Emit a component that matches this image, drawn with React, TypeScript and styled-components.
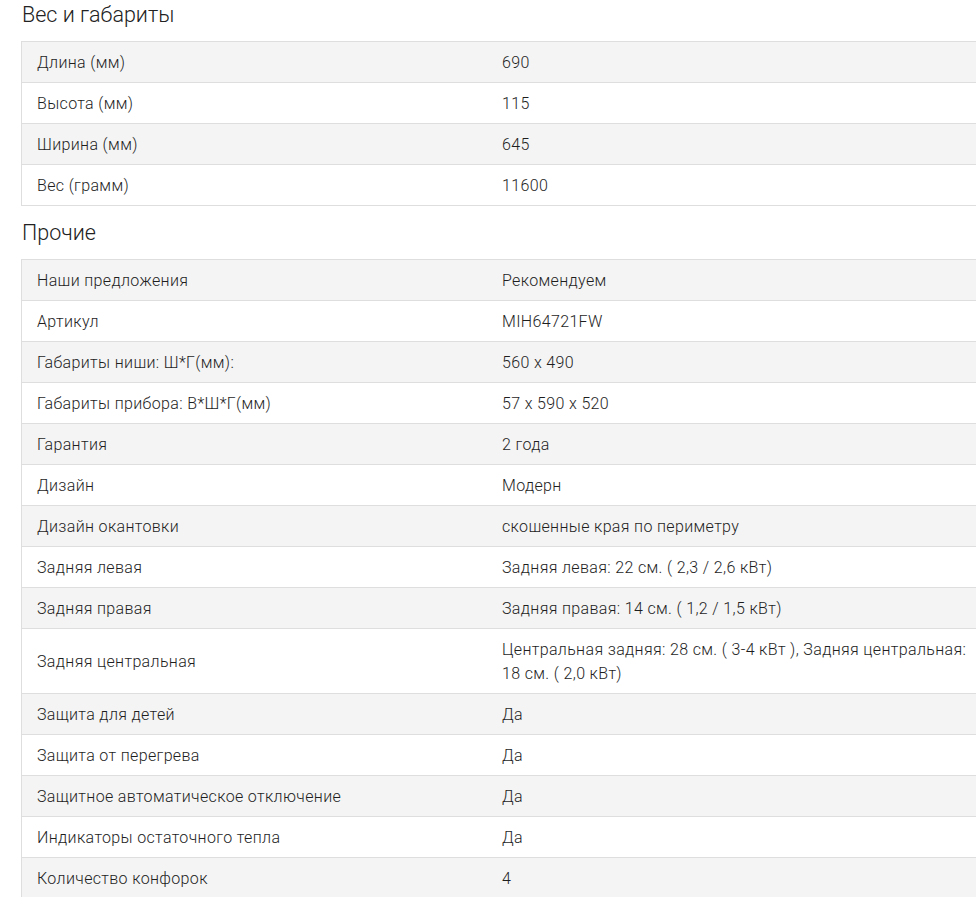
import styled, { createGlobalStyle } from "styled-components";

const GlobalStyle = createGlobalStyle`
  body {
    margin: 0;
    background: #fff;
    font-family: Roboto, "Liberation Sans", Arial, sans-serif;
    color: #333;
    overflow: hidden;
  }
`;

type Row = [string, string];

const sizes: Row[] = [
  ["Длина (мм)", "690"],
  ["Высота (мм)", "115"],
  ["Ширина (мм)", "645"],
  ["Вес (грамм)", "11600"],
];

const other: Row[] = [
  ["Наши предложения", "Рекомендуем"],
  ["Артикул", "MIH64721FW"],
  ["Габариты ниши: Ш*Г(мм):", "560 x 490"],
  ["Габариты прибора: В*Ш*Г(мм)", "57 x 590 x 520"],
  ["Гарантия", "2 года"],
  ["Дизайн", "Модерн"],
  ["Дизайн окантовки", "скошенные края по периметру"],
  ["Задняя левая", "Задняя левая: 22 см. ( 2,3 / 2,6 кВт)"],
  ["Задняя правая", "Задняя правая: 14 см. ( 1,2 / 1,5 кВт)"],
  [
    "Задняя центральная",
    "Центральная задняя: 28 см. ( 3-4 кВт ), Задняя центральная: 18 см. ( 2,0 кВт)",
  ],
  ["Защита для детей", "Да"],
  ["Защита от перегрева", "Да"],
  ["Защитное автоматическое отключение", "Да"],
  ["Индикаторы остаточного тепла", "Да"],
  ["Количество конфорок", "4"],
];

const Page = styled.div`
  padding: 0 0 0 21px;
  width: 1000px;
`;

const Heading = styled.h3`
  margin: 0;
  padding: 2px 0 0 1px;
  height: 39px;
  font-size: 21.5px;
  font-weight: 300;
  line-height: 26px;
  color: #222;
`;

const Table = styled.table`
  width: 972px;
  border-collapse: collapse;
  table-layout: fixed;
  font-size: 16px;
  font-weight: 300;
  letter-spacing: 0.35px;
  line-height: 24px;
  margin-bottom: 12px;
`;

const Tr = styled.tr<{ $shaded: boolean }>`
  background: ${({ $shaded }) => ($shaded ? "#f4f4f4" : "#fff")};
  border: 1px solid #dedede;
`;

const Td = styled.td<{ $first?: boolean }>`
  padding: 9px 15px 7px;
  vertical-align: middle;
  width: ${({ $first }) => ($first ? "435px" : "auto")};
  color: #1e1e1e;
`;

const SpecTable = ({ rows }: { rows: Row[] }) => (
  <Table>
    <tbody>
      {rows.map(([name, value], i) => (
        <Tr key={name} $shaded={i % 2 === 0}>
          <Td $first>{name}</Td>
          <Td>{value}</Td>
        </Tr>
      ))}
    </tbody>
  </Table>
);

const App = () => (
  <>
    <GlobalStyle />
    <Page>
      <Heading>Вес и габариты</Heading>
      <SpecTable rows={sizes} />
      <Heading>Прочие</Heading>
      <SpecTable rows={other} />
    </Page>
  </>
);

export default App;
